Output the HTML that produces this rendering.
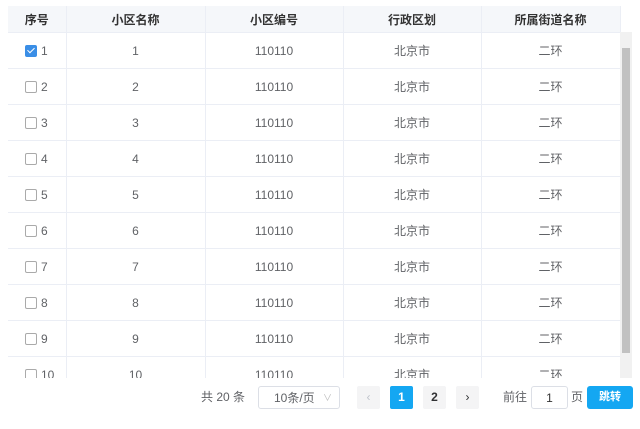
<!DOCTYPE html>
<html><head><meta charset="utf-8"><style>
body{margin:0;width:640px;height:429px;background:#fff;font-family:"Liberation Sans","Noto Sans CJK SC",sans-serif;font-size:12px;color:#606266;position:relative;overflow:hidden}
.wrap{position:absolute;left:8px;top:6px;width:624px;height:372px;overflow:hidden}
table{border-collapse:collapse;table-layout:fixed;width:612px;position:absolute;left:0;top:0}
td,th{text-align:center;border-bottom:1px solid #ebeef5;border-right:1px solid #ebeef5;padding:0}
th{height:26px;background:#f5f7fa;color:#333;font-weight:bold;font-size:12px}
td{height:35px}
td.f{text-align:left;padding-left:17px}
.cb{display:inline-block;width:10px;height:10px;border:1px solid #aaa;border-radius:2px;vertical-align:-2px;margin-right:4px;background:#fff}
.cb.on{background:#3a8ee6;border-color:#3a8ee6;position:relative}
.cb.on:after{content:"";position:absolute;left:3px;top:0px;width:3px;height:6px;border:solid #fff;border-width:0 1px 1px 0;transform:rotate(45deg)}
.sb{position:absolute;left:612px;top:26px;width:12px;height:346px;background:#f1f1f1}
.th{position:absolute;left:2px;top:16px;width:8px;height:305px;background:#c1c1c1}
.pg{position:absolute;top:386px;height:23px;line-height:23px;font-size:12px}
.box{border:1px solid #dcdfe6;border-radius:3px;box-sizing:border-box;text-align:center}
.btn{background:#f4f4f5;border-radius:2px;text-align:center;width:23px;color:#303133;font-weight:bold}
</style></head><body>
<div class="wrap">
<table>
<colgroup><col style="width:58px"><col style="width:139px"><col style="width:138px"><col style="width:138px"><col style="width:139px"></colgroup>
<tr><th>序号</th><th>小区名称</th><th>小区编号</th><th>行政区划</th><th>所属街道名称</th></tr>
<tr><td class="f"><span class="cb on"></span>1</td><td>1</td><td>110110</td><td>北京市</td><td>二环</td></tr>
<tr><td class="f"><span class="cb"></span>2</td><td>2</td><td>110110</td><td>北京市</td><td>二环</td></tr>
<tr><td class="f"><span class="cb"></span>3</td><td>3</td><td>110110</td><td>北京市</td><td>二环</td></tr>
<tr><td class="f"><span class="cb"></span>4</td><td>4</td><td>110110</td><td>北京市</td><td>二环</td></tr>
<tr><td class="f"><span class="cb"></span>5</td><td>5</td><td>110110</td><td>北京市</td><td>二环</td></tr>
<tr><td class="f"><span class="cb"></span>6</td><td>6</td><td>110110</td><td>北京市</td><td>二环</td></tr>
<tr><td class="f"><span class="cb"></span>7</td><td>7</td><td>110110</td><td>北京市</td><td>二环</td></tr>
<tr><td class="f"><span class="cb"></span>8</td><td>8</td><td>110110</td><td>北京市</td><td>二环</td></tr>
<tr><td class="f"><span class="cb"></span>9</td><td>9</td><td>110110</td><td>北京市</td><td>二环</td></tr>
<tr><td class="f"><span class="cb"></span>10</td><td>10</td><td>110110</td><td>北京市</td><td>二环</td></tr>
</table>
<div class="sb"><div class="th"></div></div>
</div>
<div class="pg" style="left:201px">共 20 条</div>
<div class="pg box" style="left:258px;width:82px;text-align:left;padding-left:15px">10条/页<span style="position:absolute;right:7px;color:#bbb;font-size:9px">∨</span></div>
<div class="pg btn" style="left:357px;color:#c0c4cc;font-weight:normal">‹</div>
<div class="pg btn" style="left:390px;background:#14a7f2;color:#fff">1</div>
<div class="pg btn" style="left:423px">2</div>
<div class="pg btn" style="left:456px;font-weight:normal">›</div>
<div class="pg" style="left:503px">前往</div>
<div class="pg box" style="left:531px;width:37px;color:#333">1</div>
<div class="pg" style="left:571px">页</div>
<div class="pg" style="left:587px;width:46px;background:#14a7f2;color:#fff;border-radius:3px;text-align:center;font-weight:bold;font-size:11px">跳转</div>
</body></html>
